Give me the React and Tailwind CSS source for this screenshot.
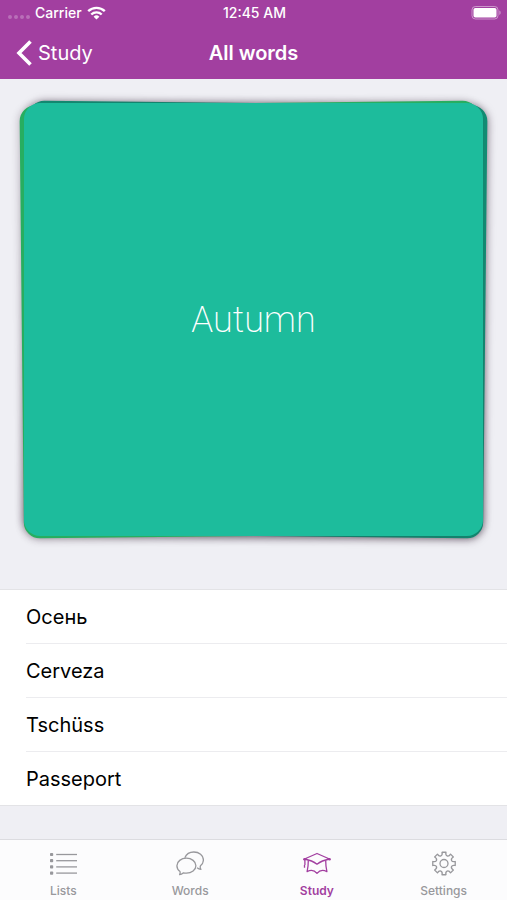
import React from 'react';
import clsx from 'clsx';

const answers = ['Осень', 'Cerveza', 'Tschüss', 'Passeport'];

function WifiIcon() {
  return (
    <svg width="19" height="14" viewBox="0 0 19 14" fill="none" stroke="currentColor" strokeWidth="2.4" aria-hidden="true">
      <path d="M1.2 5.2a12 12 0 0 1 16.6 0" />
      <path d="M4.3 8.5a7.4 7.4 0 0 1 10.4 0" />
      <path d="M9.5 13.6l-2.9-2.9a4.1 4.1 0 0 1 5.8 0z" fill="currentColor" stroke="none" />
    </svg>
  );
}

function BatteryIcon() {
  return (
    <svg width="30" height="14" viewBox="0 0 30 14" fill="none" aria-hidden="true">
      <rect x="1" y="0.5" width="26" height="12.5" rx="3.4" stroke="white" strokeOpacity="0.45" />
      <rect x="2.5" y="2" width="23" height="9.5" rx="1.8" fill="white" />
      <path d="M28.4 4.6c1.6.6 1.6 3.8 0 4.4z" fill="white" fillOpacity="0.5" />
    </svg>
  );
}

function ListsIcon() {
  return (
    <svg width="28" height="28" viewBox="0 0 28 28" stroke="currentColor" strokeWidth="1.3" aria-hidden="true">
      {[3.5, 9.7, 15.9, 22.1].map((y) => (
        <g key={y}>
          <rect x="1" y={y - 1.6} width="3.2" height="3.2" rx="0.8" fill="currentColor" stroke="none" />
          <path d={`M7.2 ${y}H28`} />
        </g>
      ))}
    </svg>
  );
}

function WordsIcon() {
  return (
    <svg width="28" height="28" viewBox="0 0 28 28" fill="none" stroke="currentColor" strokeWidth="1.3" strokeLinejoin="round" aria-hidden="true">
      <path d="M4 20.4C2 18.9.9 17 .9 14.700.9 10.500 5.200 7.200 10.400 7.200s9.500 3.300 9.500 7.500-4.300 7.500-9.500 7.500c-1 0-2-.1-2.900-.4-1.100.9-2.400 1.700-3.900 1.900.6-1.100.8-2.200.4-3.300z" />
      <path d="M8.8 6.8C10.300 3.200 13.800 1 17.800 1c5.300 0 9.600 3.500 9.600 7.900 0 2.400-1 4.400-2.900 5.900-.5 1.200-.3 2.500.5 3.500-1.600-.1-2.900-.7-4-1.500" />
    </svg>
  );
}

function StudyIcon() {
  return (
    <svg width="28" height="28" viewBox="0 0 28 28" fill="none" stroke="currentColor" strokeWidth="1.3" strokeLinejoin="round" aria-hidden="true">
      <path d="M14 2.5L26.5 8C21.500 9 17.500 10.500 14 13.200 10.500 10.500 6.500 9 1.500 8z" />
      <path d="M5.300 9.600C5.300 13.500 5 17 4.100 20.600c3.400-1.800 7.300-1.400 9.900 1.700 2.600-3.100 6.500-3.500 9.900-1.700-.9-3.600-1.200-7.100-1.200-11" />
      <path d="M1.9 8.5V14M1.500 14v2.800" />
      <circle cx="1.500" cy="8.200" r="1.300" fill="currentColor" stroke="none" />
      <circle cx="26.500" cy="8.200" r="1.300" fill="currentColor" stroke="none" />
    </svg>
  );
}

// point on a circle round the gear's hub
function polar(radius, degrees) {
  const a = (degrees * Math.PI) / 180;
  return `${(14 + radius * Math.cos(a)).toFixed(2)} ${(12.5 + radius * Math.sin(a)).toFixed(2)}`;
}

const gearPath =
  `M${polar(11.4, -10)}` +
  [0, 45, 90, 135, 180, 225, 270, 315]
    .map((a) => `L${polar(11.4, a + 10)}C${polar(7.4, a + 8)} ${polar(7.4, a + 37)} ${polar(11.4, a + 35)}`)
    .join('') +
  'Z';

function SettingsIcon() {
  return (
    <svg width="28" height="28" viewBox="0 0 28 28" fill="none" stroke="currentColor" strokeWidth="1.3" strokeLinejoin="round" aria-hidden="true">
      <circle cx="14" cy="12.5" r="4" />
      <path d={gearPath} />
    </svg>
  );
}

const tabs = [
  { label: 'Lists', icon: ListsIcon },
  { label: 'Words', icon: WordsIcon },
  { label: 'Study', icon: StudyIcon },
  { label: 'Settings', icon: SettingsIcon },
];

function Header() {
  return (
    <header className="bg-[#a23fa0] text-white">
      <div className="grid h-[26px] grid-cols-3 items-center pr-[6px] pl-2 text-sm font-medium">
        <div className="flex items-center gap-[5px]">
          <span className="flex gap-[2px] pt-2">
            {[0, 1, 2, 3].map((dot) => (
              <span key={dot} className="size-1 rounded-full bg-white/25" />
            ))}
          </span>
          <span>Carrier</span>
          <WifiIcon />
        </div>
        <span className="text-center">12:45 AM</span>
        <div className="flex justify-end">
          <BatteryIcon />
        </div>
      </div>
      <div className="grid h-[53px] grid-cols-3 items-center px-4">
        <button type="button" className="flex items-center gap-[6px] text-xl">
          <svg width="16" height="26" viewBox="0 0 16 26" fill="none" stroke="currentColor" strokeWidth="3.6" aria-hidden="true">
            <path d="M14.5 1.5L3 13l11.5 11.5" />
          </svg>
          Study
        </button>
        <h1 className="text-center text-xl font-semibold">All words</h1>
      </div>
    </header>
  );
}

function CardStack() {
  return (
    <section className="px-6 pt-6 pb-[53px]">
      <div className="relative aspect-[459/433]">
        <div className="absolute inset-0 origin-bottom rotate-[0.6deg] rounded-2xl bg-[#128f75] shadow-[0_1px_8px_rgba(40,20,40,0.6)]" />
        <div className="absolute inset-0 origin-bottom rotate-[-0.6deg] rounded-2xl bg-[#27ae60] shadow-[0_1px_8px_rgba(40,20,40,0.3)]" />
        <div className="relative flex h-full items-center justify-center rounded-2xl bg-[#1dbc9c]">
          <span className="font-['Roboto',sans-serif] text-4xl font-extralight text-white">Autumn</span>
        </div>
      </div>
    </section>
  );
}

export default function App() {
  return (
    <div className="flex min-h-screen flex-col bg-[#efeff4] font-['Inter',sans-serif] text-black">
      <Header />
      <main className="flex-1">
        <CardStack />
        <ul className="border-y border-[#e3e3e6] bg-white pl-[26px]">
          {answers.map((word) => (
            <li key={word} className="border-b border-[#ececef] last:border-b-0">
              <button type="button" className="block h-[53px] w-full text-left text-xl">
                {word}
              </button>
            </li>
          ))}
        </ul>
      </main>
      <nav className="grid h-[61px] grid-cols-4 border-t border-[#dcdce0] bg-[#fcfcfd]">
        {tabs.map(({ label, icon: Icon }) => (
          <a
            key={label}
            href="#"
            className={clsx(
              'flex flex-col items-center gap-1 pt-[11px] text-xs',
              label === 'Study' ? 'font-semibold text-[#a23fa0]' : 'font-medium text-[#98989c]'
            )}
          >
            <Icon />
            <span>{label}</span>
          </a>
        ))}
      </nav>
    </div>
  );
}
